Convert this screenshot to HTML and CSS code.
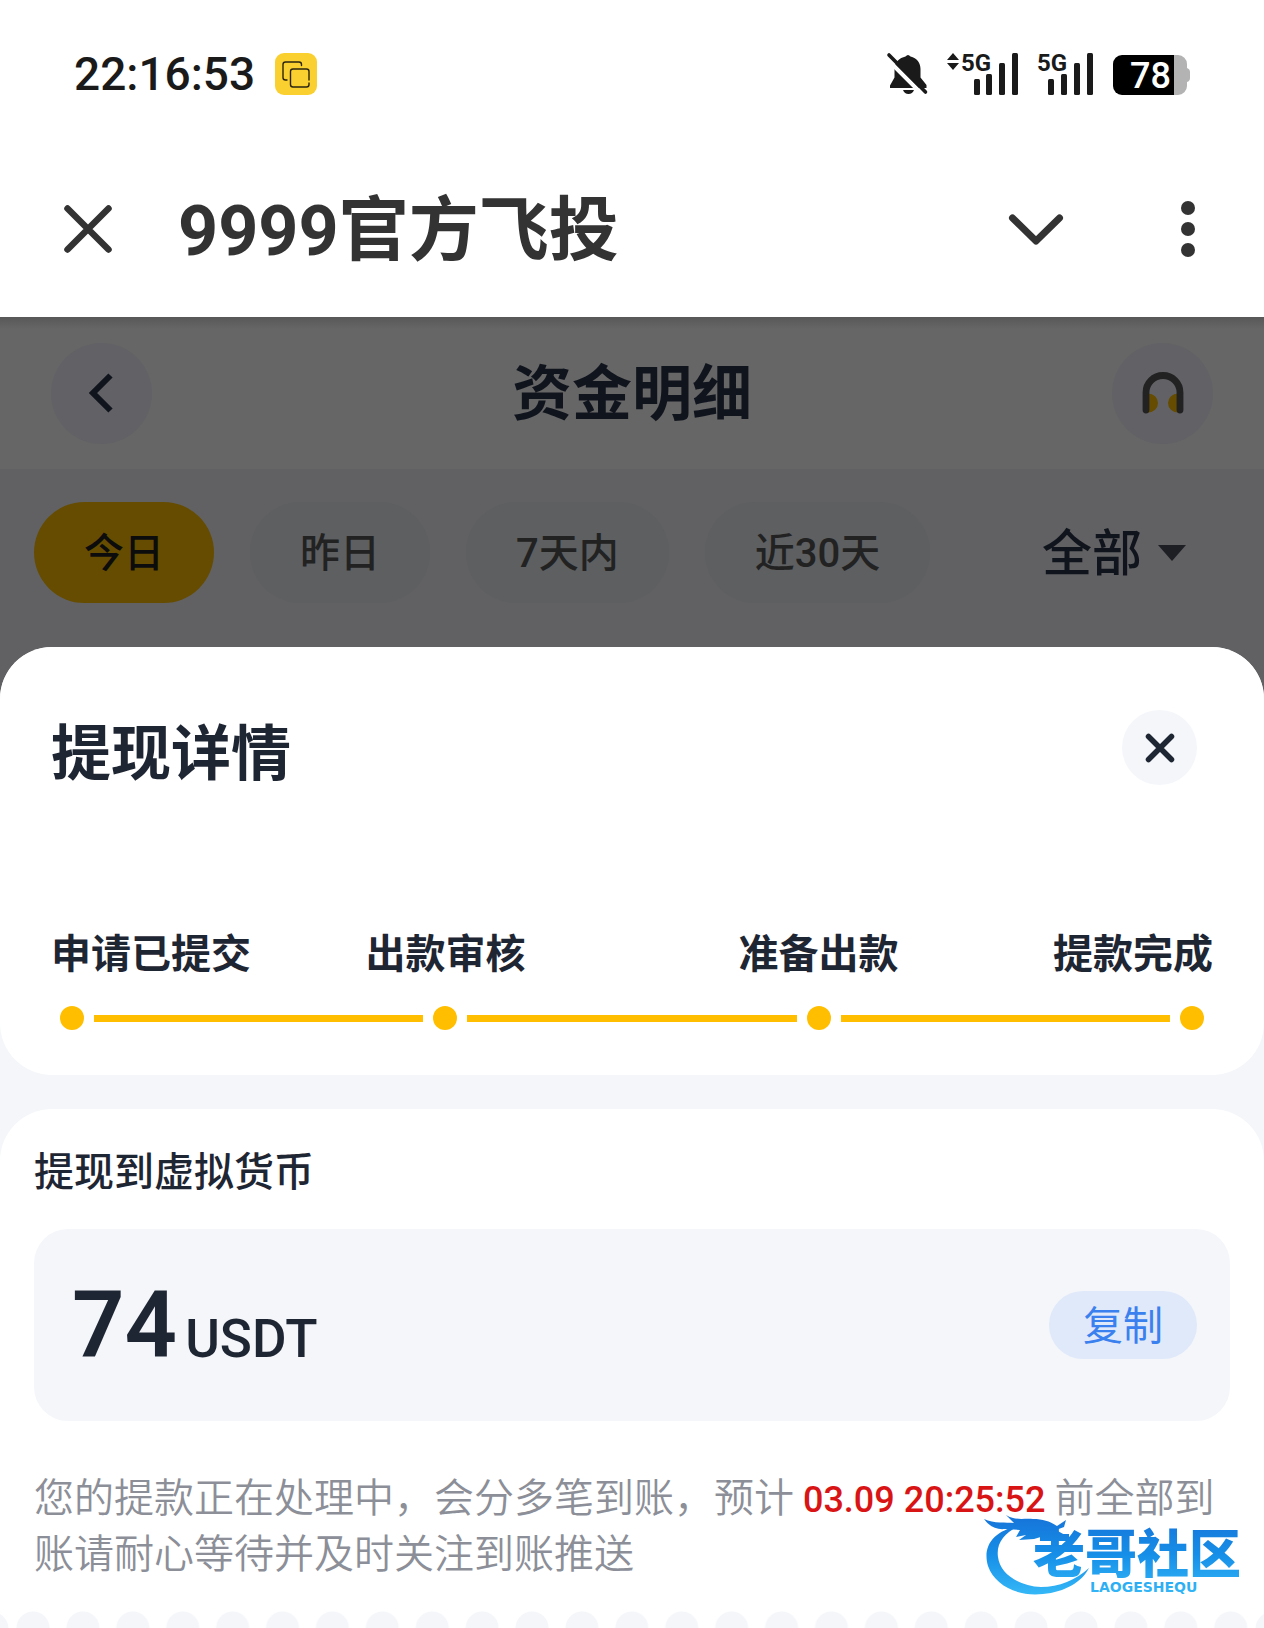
FILE: index.html
```html
<!DOCTYPE html>
<html lang="zh-CN">
<head>
<meta charset="utf-8">
<meta name="viewport" content="width=device-width, initial-scale=1">
<title>9999官方飞投</title>
<link rel="stylesheet" href="styles.css">
</head>
<body>
<div class="status-bar">
  <div class="status-left">
    <span class="clock">22:16:53</span>
    <svg class="copy-badge" width="42" height="42" viewBox="0 0 42 42" aria-hidden="true">
      <rect width="42" height="42" rx="9" fill="#f9d02f"/>
      <g fill="none" stroke="#2b2410" stroke-width="1.4" stroke-linecap="round">
        <path d="M12 27h-1.500a2.500 2.500 0 0 1-2.500-2.500v-13a2.500 2.500 0 0 1 2.500-2.500h13.500a2.500 2.500 0 0 1 2.500 2.500v1"/>
        <path d="M34 27v-8.500a2.500 2.500 0 0 0-2.500-2.500h-13.500a2.500 2.500 0 0 0-2.500 2.500v13a2.500 2.500 0 0 0 2.500 2.500h13.500a2.500 2.500 0 0 0 2.500-2.500v-1.500"/>
      </g>
    </svg>
  </div>
  <div class="status-right">
    <svg width="40" height="42" viewBox="0 0 40 42" aria-hidden="true">
      <path fill="#1a1a1a" d="M18.500 3.500Q21 .5 23.500 3.500C30 5 33.500 10 33.500 16v8.500L39.500 32v3H3v-2.500l4.500-8V16C7.500 9 12.500 5 18.500 3.500zM16 37h11q-1.500 4-5.500 4T16 37z"/>
      <path stroke="#fff" stroke-width="4" d="M-1 5 36 42"/>
      <path stroke="#1a1a1a" stroke-width="3.600" stroke-linecap="round" d="M2 2 38.500 39"/>
    </svg>
    <svg width="71" height="42" viewBox="0 0 71 42" aria-hidden="true" fill="#1a1a1a">
      <path d="M6 0 12 7H0zM0 10h12l-6 7z"/>
      <text class="net" x="14" y="18">5G</text>
      <rect x="27" y="26" width="6" height="16" rx="1.500"/><rect x="39" y="21" width="6" height="21" rx="1.500"/><rect x="52" y="10" width="6" height="32" rx="1.500"/><rect x="65" y="0" width="6" height="42" rx="1.500"/>
    </svg>
    <svg width="55" height="42" viewBox="0 0 55 42" aria-hidden="true" fill="#1a1a1a">
      <text class="net" x="-1" y="18">5G</text>
      <rect x="10" y="26" width="6" height="16" rx="1.500"/><rect x="23" y="21" width="6" height="21" rx="1.500"/><rect x="36" y="10" width="6" height="32" rx="1.500"/><rect x="49" y="0" width="6" height="42" rx="1.500"/>
    </svg>
    <svg width="77" height="42" viewBox="0 0 77 42" aria-hidden="true">
      <path fill="#b3b3b3" d="M56 2h9a9 9 0 0 1 9 9v4q3 1 3 4v6q0 3-3 4v4a9 9 0 0 1-9 9h-9z"/>
      <path fill="#000" d="M9 2h52v40H9a9 9 0 0 1-9-9V11a9 9 0 0 1 9-9z"/>
      <text class="charge" x="17" y="35">78</text>
    </svg>
  </div>
</div>

<header class="app-bar">
  <button class="icon-button" aria-label="关闭">
    <svg width="48" height="48" viewBox="0 0 48 48" fill="none" stroke="#333" stroke-width="6.500" stroke-linecap="round"><path d="M3.500 3.500 44.500 44.500M44.500 3.500 3.500 44.500"/></svg>
  </button>
  <h1 class="app-title">9999官方飞投</h1>
  <div class="app-actions">
    <button class="icon-button" aria-label="展开">
      <svg width="54" height="32" viewBox="0 0 54 32" fill="none" stroke="#333" stroke-width="7" stroke-linecap="round" stroke-linejoin="round"><path d="M3.500 5 27 28 50.500 5"/></svg>
    </button>
    <button class="icon-button" aria-label="更多">
      <svg width="14" height="56" viewBox="0 0 14 56" fill="#333"><circle cx="7" cy="7" r="7"/><circle cx="7" cy="28" r="7"/><circle cx="7" cy="49" r="7"/></svg>
    </button>
  </div>
</header>

<main class="page">
  <div class="toolbar">
    <button class="round-button" aria-label="返回">
      <svg width="25" height="40" viewBox="0 0 25 40" fill="none" stroke="#10141d" stroke-width="6"><path d="M21.500 2.500 4 20 21.500 37.500"/></svg>
    </button>
    <h2 class="toolbar-title">资金明细</h2>
    <button class="round-button" aria-label="客服">
      <svg width="42" height="42" viewBox="0 0 42 42"><path fill="#664c00" d="M6 21.500a10 9.500 0 0 1 0 19zM36 21.500a10 9.500 0 0 0 0 19z"/><path fill="none" stroke="#222" stroke-width="6.800" stroke-linecap="round" d="M4 38V20.500a17 17 0 0 1 34 0V38"/></svg>
    </button>
  </div>
  <div class="filters">
    <button class="pill pill-active">今日</button>
    <button class="pill">昨日</button>
    <button class="pill">7天内</button>
    <button class="pill">近30天</button>
    <button class="type-filter"><span class="type-name">全部</span>
      <svg width="28" height="16" viewBox="0 0 28 16" fill="#1d1f24" aria-hidden="true"><path d="M0 0h28L14 16z"/></svg>
    </button>
  </div>

  <section class="sheet" role="dialog" aria-labelledby="sheet-title">
    <div class="card progress-card">
      <div class="sheet-head">
        <h2 class="sheet-title" id="sheet-title">提现详情</h2>
        <button class="close-button" aria-label="关闭详情">
          <svg width="30" height="30" viewBox="0 0 30 30" fill="none" stroke="#1f2633" stroke-width="5.500" stroke-linecap="round"><path d="M3.500 3.500 26.500 26.500M26.500 3.500 3.500 26.500"/></svg>
        </button>
      </div>
      <ol class="steps">
        <li>申请已提交</li>
        <li>出款审核</li>
        <li>准备出款</li>
        <li>提款完成</li>
      </ol>
      <div class="track" aria-hidden="true">
        <i class="dot"></i><i class="bar"></i><i class="dot"></i><i class="bar"></i><i class="dot"></i><i class="bar"></i><i class="dot"></i>
      </div>
    </div>

    <div class="card detail-card">
      <h3 class="detail-title">提现到虚拟货币</h3>
      <div class="amount-box">
        <p class="amount"><span class="value">74</span><span class="unit">USDT</span></p>
        <button class="copy-button">复制</button>
      </div>
      <p class="notice">您的提款正在处理中，会分多笔到账，预计 <time class="deadline">03.09 20:25:52</time> 前全部到账请耐心等待并及时关注到账推送</p>
      <div class="perforation"></div>
      <svg class="watermark" width="262" height="84" viewBox="0 0 262 84" role="img" aria-label="老哥社区">
        <defs><linearGradient id="blue" gradientUnits="userSpaceOnUse" x1="0" y1="0" x2="0" y2="80"><stop offset="0" stop-color="#1673d8"/><stop offset=".5" stop-color="#168fe8"/><stop offset="1" stop-color="#35b8f7"/></linearGradient></defs>
        <g fill="url(#blue)">
          <path d="M36 11C10 15-2 31 4 51c7 20 31 31 55 28 22-2 39-12 46-26-13 12-30 19-48 19C35 71 16 59 14 42 12 29 20 17 36 11z"/>
          <path d="M0 4c10 5 22 3 30 4L22 0c10 6 18 3 27 4 10 0 16 2 24 7l9-6-2 7-8 3 9 5-11-1 8 6-18-4-10 3-15 1 7-5-10 2 4-7-15-1C12 15 5 11 0 4z"/>
          <text class="mark-name" x="49" y="58">老哥社区</text>
          <text class="mark-latin" x="106" y="77">LAOGESHEQU</text>
        </g>
      </svg>
    </div>
  </section>
</main>
</body>
</html>
```

FILE: styles.css
```css
* { box-sizing: border-box; }

body {
  margin: 0;
  min-height: 100vh;
  display: flex;
  flex-direction: column;
  background: #fff;
  color: #1f2633;
  font-family: Roboto, "Noto Sans CJK SC", sans-serif;
}

h1, h2, h3, p, ol { margin: 0; padding: 0; }

button {
  border: 0;
  padding: 0;
  background: none;
  color: inherit;
  font: inherit;
  cursor: pointer;
}

svg { display: block; overflow: visible; }

/* Phone status bar */
.status-bar {
  height: 148px;
  padding: 0 74px;
  display: flex;
  align-items: center;
  justify-content: space-between;
}
.status-left, .status-right { display: flex; align-items: center; gap: 20px; }
.clock { font-size: 46px; font-weight: 500; color: #1a1a1a; }
.net { font-size: 24px; font-weight: 700; }
.charge { font-size: 36px; font-weight: 500; fill: #fff; }

/* Browser title bar */
.app-bar {
  height: 169px;
  padding: 0 69px 8px 64px;
  display: flex;
  align-items: center;
  gap: 66px;
}
.app-title {
  flex: 1;
  padding-top: 4px;
  font-size: 70px;
  line-height: 80px;
  font-weight: 700;
  color: #333;
  white-space: nowrap;
}
.app-actions { display: flex; align-items: center; gap: 118px; }

/* Dimmed page behind the sheet */
.page {
  flex: 1;
  display: flex;
  flex-direction: column;
  background: #616163;
}
.toolbar {
  height: 152px;
  padding: 0 51px;
  display: flex;
  align-items: center;
  justify-content: space-between;
  background: linear-gradient(#585858, #666 12px);
}
.toolbar-title {
  padding-top: 4px;
  font-size: 60px;
  line-height: 80px;
  font-weight: 600;
  color: #10141d;
}
.round-button {
  width: 101px;
  height: 101px;
  display: grid;
  place-items: center;
  border-radius: 50%;
  background: #626266;
}
.filters {
  padding: 33px 78px 44px 34px;
  display: flex;
  gap: 36px;
}
.pill {
  height: 101px;
  padding: 0 50px 6px;
  border-radius: 51px;
  background: #5d5f61;
  color: #222;
  font-size: 40px;
  font-weight: 500;
  white-space: nowrap;
}
.pill-active { background: #664c00; color: #0c0c0c; }
.type-filter {
  margin-left: auto;
  display: flex;
  align-items: center;
  gap: 16px;
  font-size: 50px;
  font-weight: 500;
  color: #10141d;
  white-space: nowrap;
}
.type-name { padding-bottom: 8px; }

/* Bottom sheet */
.sheet {
  flex: 1;
  display: flex;
  flex-direction: column;
  gap: 34px;
  border-radius: 52px 52px 0 0;
  background: #f4f6fa;
}
.card { background: #fff; }
.progress-card { border-radius: 52px; padding: 63px 51px 45px; }
.sheet-head {
  display: flex;
  align-items: flex-start;
  justify-content: space-between;
  padding-right: 16px;
}
.sheet-title { padding-top: 5px; font-size: 60px; line-height: 80px; font-weight: 700; }
.close-button {
  width: 75px;
  height: 75px;
  display: grid;
  place-items: center;
  border-radius: 50%;
  background: #f4f6fa;
}
.steps {
  margin-top: 132px;
  display: grid;
  grid-template-columns: 208px 1fr 1fr 208px;
  list-style: none;
  font-size: 40px;
  line-height: 56px;
  font-weight: 700;
  text-align: center;
  white-space: nowrap;
}
.steps li:first-child { text-align: left; }
.steps li:last-child { text-align: right; }
.track {
  margin-top: 23px;
  padding: 0 9px;
  display: flex;
  align-items: center;
  gap: 10px;
}
.dot { width: 24px; height: 24px; border-radius: 50%; background: #ffbf00; }
.bar { flex: 1; height: 7px; background: #ffbf00; }

.detail-card {
  position: relative;
  flex: 1;
  display: flex;
  flex-direction: column;
  padding-top: 36px;
  border-radius: 52px 52px 0 0;
}
.detail-title {
  padding: 0 34px;
  font-size: 40px;
  line-height: 56px;
  font-weight: 500;
}
.amount-box {
  height: 192px;
  margin: 28px 34px 46px;
  padding: 0 33px 0 38px;
  display: flex;
  align-items: center;
  justify-content: space-between;
  border-radius: 34px;
  background: #f4f6fa;
}
.amount {
  display: flex;
  align-items: baseline;
  gap: 8px;
}
.value { font-size: 92px; font-weight: 600; }
.unit { font-size: 53px; font-weight: 500; }
.copy-button {
  height: 68px;
  padding: 4px 34px 0;
  border-radius: 34px;
  background: #e0e9fa;
  color: #3a80ee;
  font-size: 40px;
  line-height: 56px;
}
.notice {
  padding: 0 34px;
  font-family: "Noto Sans CJK SC", sans-serif;
  font-size: 40px;
  line-height: 56px;
  font-weight: 350;
  color: #8c8f98;
}
.deadline {
  font-family: Roboto, sans-serif;
  font-size: 36px;
  line-height: 36px;
  font-weight: 500;
  color: #d91414;
}

/* Ticket edge: a row of round holes along the bottom */
.perforation {
  height: 17px;
  margin-top: auto;
  padding: 0 8px;
  background:
    radial-gradient(circle 17px at 25px 17px, #f4f6fa 16px, transparent 17px) 0 0 / 50px 17px round content-box,
    radial-gradient(circle 18px at -9px 18px, #f4f6fa 17px, transparent 18px),
    radial-gradient(circle 18px at calc(100% + 9px) 18px, #f4f6fa 17px, transparent 18px);
  background-origin: content-box, border-box, border-box;
}

.watermark { position: absolute; right: 18px; bottom: 29px; }
.mark-name { font-family: "Noto Sans CJK SC", sans-serif; font-size: 52px; font-weight: 900; }
.mark-latin { font-family: "DejaVu Sans", sans-serif; font-size: 14px; font-weight: 700; }
```
